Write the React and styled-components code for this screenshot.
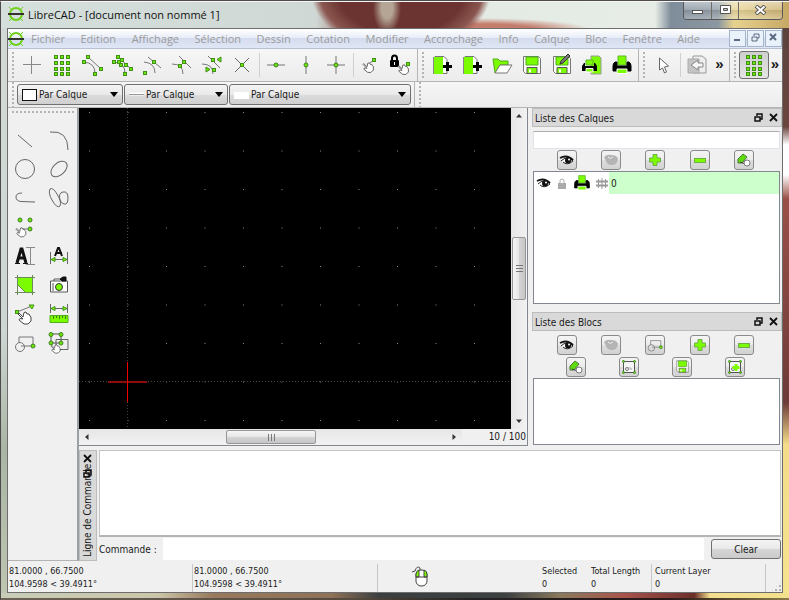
import { useState } from 'react';
import styled, { createGlobalStyle, css } from 'styled-components';

const GlobalStyle = createGlobalStyle`
  * {
    box-sizing: border-box;
  }
  body {
    margin: 0;
    font-family: 'DejaVu Sans Condensed', 'DejaVu Sans', sans-serif;
    font-size: 10px;
    color: #1a1a1a;
  }
  button, input, select {
    font: inherit;
    color: inherit;
  }
`;

const GREEN = '#7cfc00';

/* ---------- window frame ---------- */

const Desktop = styled.div`
  min-height: 100vh;
  display: flex;
  flex-direction: column;
  padding: 0 6px 7px 7px;
  border-top: 1px solid #4e4b4a;
  background:
    linear-gradient(#4e4b4a, #4e4b4a) 0 0 / 1px 100% no-repeat,
    linear-gradient(90deg, #6a6255, #55493c 45%, #222 60%, #2b1a18 85%, #8a7a48) 0 100% / 100% 2px no-repeat,
    linear-gradient(90deg, #c8cdb8, #cbc6a9 20%, #98795c 27%, #8e7258 42%, #3c3f3f 48%, #3c4040 64%, #8a7a5e 71%, #a8544c 79%, #6b3029 88%, #f3e08e 90%) 0 100% / 100% 7px no-repeat,
    linear-gradient(#59423c, #6b4640 21%, #fff 24%, #fff 29%, #9a5048 33%, #6d3b38 67%, #f3dc8a 74%, #f5e48f) 100% 0 / 6px 100% no-repeat,
    linear-gradient(#d3dad6, #cdd6d3 55%, #aab5a5 75%, #bfc6b2) 0 0 / 7px 100% no-repeat;
`;

const TitleBar = styled.header`
  height: 27px;
  margin: 0 -6px 0 -7px;
  padding: 0 6px 0 7px;
  display: flex;
  align-items: flex-start;
  border-left: 1px solid #4e4b4a;
  border-top: 1px solid #f4f6f5;
  background:
    radial-gradient(ellipse 14px 26px at 386px 6px, #b5a594 40%, transparent),
    radial-gradient(ellipse 90px 60px at 400px -10px, #6b3431 70%, #8b5650 90%, transparent),
    radial-gradient(ellipse 110px 12px at 480px 28px, #c47c6c 50%, transparent),
    linear-gradient(90deg, #d5dfdb 0, #cfd8d4 40%, #8d4d48 46%, #6b3431 56%, #e3ebe4 60%, #e7ede6 83%, #7f8d9b 85%, #8b97a1 91%, #e7d38f 93%, #c7a865);
`;

const Title = styled.h1`
  flex: 1;
  margin: 0;
  padding-left: 4px;
  font: 11px/25px 'Open Sans', 'Noto Sans', sans-serif;
  color: #111;
`;

const TitleIcon = styled.span`
  display: flex;
  padding-top: 4px;
`;

const WindowButtons = styled.div`
  display: flex;
  border: 1px solid #57575a;
  border-top: 0;
  border-radius: 0 0 4px 4px;
  background: rgba(255, 255, 255, 0.1);
`;

const WindowButton = styled.button`
  width: ${(props) => (props.$wide ? 44 : 27)}px;
  height: 17px;
  padding: 0;
  border: 0;
  border-left: 1px solid #6f6b65;
  background: linear-gradient(rgba(255, 255, 255, 0.4), rgba(255, 255, 255, 0.1) 50%, rgba(0, 0, 0, 0.08) 50%, rgba(255, 255, 255, 0.2));
  &:first-child {
    border-left: 0;
  }
`;

const Client = styled.div`
  flex: 1;
  display: flex;
  flex-direction: column;
  border: 1px solid #6d6d6d;
  background: #f0f0f0;
`;

/* ---------- menu ---------- */

const MenuBar = styled.nav`
  height: 20px;
  display: flex;
  align-items: center;
  border-bottom: 1px solid #b9c0cf;
  background: linear-gradient(#fff, #e8edf7 45%, #d5dcee 50%, #dfe6f5);
`;

const MenuList = styled.div`
  flex: 1;
  display: flex;
  justify-content: space-between;
  margin-right: 22px;
`;

const MenuItem = styled.button`
  padding: 0 7px;
  border: 0;
  background: none;
  font: 11px/18px 'Open Sans', 'Noto Sans', sans-serif;
  color: #9c9c9c;
`;

const ChildButtons = styled.div`
  display: flex;
  gap: 1px;
`;

const ChildButton = styled.button`
  width: 17px;
  height: 17px;
  padding: 0;
  border: 1px solid #a3b4cb;
  background: #e9f1fa;
`;

/* ---------- toolbars ---------- */

const ToolRow = styled.div`
  display: flex;
  height: ${(props) => props.$height}px;
  border-bottom: 1px solid #b4b4b4;
  background: linear-gradient(#f6f6f6, #ececec);
`;

const ToolGroup = styled.div`
  display: flex;
  align-items: center;
  border-right: ${(props) => (props.$last ? 0 : '1px solid #b4b4b4')};
  padding-right: ${(props) => props.$end || 0}px;
`;

const dots = css`
  background-image: radial-gradient(circle at 1px 1px, #b4b4b4 1px, transparent 1px);
  background-size: 4px 4px;
`;

const Handle = styled.div`
  width: 3px;
  height: 26px;
  margin: 0 2px 0 4px;
  ${dots}
`;

const Divider = styled.div`
  width: 1px;
  height: 24px;
  margin: 0 1px 0 2px;
  background: #d0d0d0;
`;

const ToolButton = styled.button`
  width: 30px;
  height: 28px;
  padding: 0;
  display: flex;
  align-items: center;
  justify-content: center;
  border: 1px solid ${(props) => (props.$pressed ? '#6f6f6f' : 'transparent')};
  border-radius: 3px;
  background: ${(props) => (props.$pressed ? 'linear-gradient(#cfcfcf, #e4e4e4)' : 'none')};
`;

const MoreButton = styled.button`
  width: ${(props) => props.$width}px;
  height: 28px;
  padding: 0 0 2px;
  border: 0;
  background: none;
  font: bold 15px/20px 'Liberation Sans', sans-serif;
`;

const Combo = styled.label`
  display: flex;
  align-items: center;
  width: ${(props) => props.$width}px;
  height: 21px;
  margin-right: 1px;
  padding: 0 4px;
  gap: 2px;
  border: 1px solid #707070;
  border-radius: 3px;
  background: linear-gradient(#f4f4f4, #e9e9e9 50%, #dcdcdc 50%, #cfcfcf);
`;

const ComboSelect = styled.select`
  flex: 1;
  min-width: 0;
  padding: 0;
  border: 0;
  background: none;
  appearance: none;
`;

/* ---------- work area ---------- */

const Body = styled.div`
  flex: 1;
  display: flex;
`;

const Palette = styled.aside`
  width: 71px;
  border-right: 2px solid #9c9fa4;
  border-bottom: 1px solid #b4b4b4;
`;

const PaletteHandle = styled.div`
  height: 3px;
  margin: 3px 2px 11px 4px;
  ${dots}
`;

const PaletteGrid = styled.div`
  display: grid;
  grid-template-columns: 34px 34px;
  grid-auto-rows: 29px;
`;

const PaletteButton = styled.button`
  padding: 0;
  display: flex;
  align-items: center;
  justify-content: center;
  border: 0;
  background: none;
  grid-column: ${(props) => (props.$wide ? 'span 2' : 'auto')};
  width: 34px;
`;

const Right = styled.div`
  flex: 1;
  min-width: 0;
  display: flex;
  flex-direction: column;
`;

const Upper = styled.div`
  flex: 1;
  display: flex;
  gap: 4px;
`;

const Drawing = styled.main`
  flex: 1;
  min-width: 0;
  display: grid;
  grid-template: 1fr 16px / 1fr 16px;
  border-right: 1px solid #828790;
  border-bottom: 1px solid #828790;
`;

const Canvas = styled.div`
  position: relative;
  overflow: hidden;
  background: #000;
  svg {
    position: absolute;
    inset: 0;
  }
`;

const Bar = styled.div`
  display: flex;
  flex-direction: ${(props) => (props.$vertical ? 'column' : 'row')};
  flex: 1;
  background: linear-gradient(${(props) => (props.$vertical ? '90deg' : '180deg')}, #e6e6e6, #f2f2f2);
`;

const ArrowButton = styled.button`
  width: 16px;
  height: 16px;
  padding: 0;
  display: flex;
  align-items: center;
  justify-content: center;
  border: 0;
  background: none;
`;

const Track = styled.div`
  flex: 1;
`;

const Thumb = styled.div`
  display: flex;
  align-items: center;
  justify-content: center;
  width: ${(props) => (props.$vertical ? 14 : 90)}px;
  height: ${(props) => (props.$vertical ? 63 : 14)}px;
  margin: 1px;
  border: 1px solid #979797;
  border-radius: 2px;
  background: linear-gradient(${(props) => (props.$vertical ? '90deg' : '180deg')}, #f5f5f5, #e6e6e6 50%, #d4d4d4 50%, #c6c6c6);
`;

const BottomStrip = styled.div`
  grid-column: span 2;
  display: flex;
`;

const Zoom = styled.output`
  width: 65px;
  padding-right: 1px;
  line-height: 15px;
  text-align: right;
`;

/* ---------- docks ---------- */

const Docks = styled.div`
  width: 250px;
  display: flex;
  flex-direction: column;
  gap: 7px;
`;

const Dock = styled.section`
  flex: ${(props) => props.$grow} 0 auto;
  display: flex;
  flex-direction: column;
  padding-bottom: 1px;
`;

const DockTitle = styled.h2`
  display: flex;
  align-items: center;
  gap: 6px;
  height: 19px;
  margin: 0;
  padding: 0 3px 0 2px;
  border: 1px solid #bcbcbc;
  background: #d9d9d9;
  font-size: 10px;
  font-weight: normal;
  span {
    flex: 1;
    padding-top: 2px;
  }
`;

const DockButton = styled.button`
  display: flex;
  padding: 0;
  border: 0;
  background: none;
`;

const DockBody = styled.div`
  flex: 1;
  display: flex;
  flex-direction: column;
  padding: ${(props) => props.$top}px 2px 0 1px;
`;

const Filter = styled.input`
  height: 18px;
  padding: 0 3px;
  border: 1px solid #e2e3ea;
  border-top-color: #abadb3;
  background: #fff;
`;

const ButtonRow = styled.div`
  display: flex;
  justify-content: space-evenly;
  padding: 1px 2px 1px 0;
`;

const SmallButton = styled.button`
  width: 20px;
  height: 20px;
  padding: 0;
  display: flex;
  align-items: center;
  justify-content: center;
  border: 1px solid #8a8a8a;
  border-radius: 3px;
  background: linear-gradient(#f4f4f4, #ebebeb 50%, #dedede 50%, #d2d2d2);
`;

const ListBox = styled.div`
  flex: 1;
  border: 1px solid #828790;
  background: #fff;
`;

const LayerTable = styled.table`
  width: 100%;
  border-collapse: collapse;
  td {
    height: 22px;
    padding: 0;
  }
  svg {
    display: block;
    margin: auto;
  }
`;

const IconCell = styled.td`
  width: ${(props) => props.$width}px;
`;

const NameCell = styled.td`
  background: #ccffcc;
  span {
    padding-left: 2px;
  }
`;

/* ---------- command line ---------- */

const CommandDock = styled.section`
  display: flex;
  height: 111px;
  margin-top: 4px;
`;

const CommandTitle = styled.div`
  position: relative;
  width: 18px;
  padding-bottom: 3px;
  border: 1px solid #bcbcbc;
  background: #d9d9d9;
  h2 {
    width: 100%;
    height: 100%;
    margin: 0;
    font-size: 10px;
    font-weight: normal;
    line-height: 16px;
    writing-mode: vertical-rl;
    transform: rotate(180deg);
  }
`;

const CommandButtons = styled.div`
  position: absolute;
  top: 3px;
  left: 3px;
  display: flex;
  flex-direction: column;
  gap: 6px;
`;

const CommandBody = styled.div`
  flex: 1;
  display: flex;
  flex-direction: column;
  padding: 0 1px 0 2px;
`;

const History = styled.div`
  flex: 1;
  border: 1px solid #c4c4c4;
  border-bottom: 2px solid #b4b4b4;
  background: #fff;
`;

const Prompt = styled.form`
  display: flex;
  align-items: center;
  height: 24px;
  input {
    flex: 1;
    height: 22px;
    margin: 0 7px 0 6px;
    border: 0;
    background: #fff;
  }
`;

const ClearButton = styled.button`
  width: 70px;
  height: 20px;
  padding: 0;
  border: 1px solid #707070;
  border-radius: 3px;
  background: linear-gradient(#f4f4f4, #e9e9e9 50%, #d6d6d6 50%, #cbcbcb);
`;

/* ---------- status bar ---------- */

const StatusBar = styled.footer`
  display: flex;
  height: 31px;
  padding-top: 3px;
  font-size: 9px;
  line-height: 13px;
`;

const StatusCell = styled.div`
  flex: ${(props) => (props.$grow ? 1 : 'none')};
  width: ${(props) => props.$width}px;
  padding: 1px 0 0 ${(props) => props.$pad ?? 1}px;
  border-left: 1px solid ${(props) => (props.$line ? '#c6c6c6' : 'transparent')};
  white-space: pre;
`;

const Grip = styled.div`
  align-self: flex-end;
  width: 11px;
  height: 11px;
  ${dots}
  clip-path: polygon(100% 0, 100% 100%, 0 100%);
`;

/* ---------- icons ---------- */

const Svg = ({ w = 22, h = w, children, box }) => (
  <svg width={w} height={h} viewBox={box || `0 0 ${w} ${h}`} fill="none" stroke="#777" aria-hidden="true">
    {children}
  </svg>
);

// green square handle used by most snap icons
const Node = ({ x, y }) => (
  <rect x={Math.floor(x) - 1.5} y={Math.floor(y) - 1.5} width="3" height="3" fill="#6be60a" stroke="#3f8f18" />
);

const Dot = ({ x, y, r = 2 }) => <circle cx={x} cy={y} r={r} fill="#6be60a" stroke="#3f7f20" />;

const Hand = ({ x = 0, y = 0, s = 1 }) => (
  <g transform={`translate(${x} ${y}) scale(${s})`}>
    <path d="M1 2 L5 6 L6 1.5 L8 1 L9 3 L11 3 L12 5 L13 6 L13 10 L10 13 L6 13 L1 9 L2 7.5 L5 8 L0 3Z" fill="#fff" stroke="#444" />
  </g>
);

const Logo = () => (
  <Svg w={16} h={16}>
    <circle cx="8" cy="8" r="6" stroke="#6fd01c" strokeWidth="2" />
    <path d="M1 1l3 3M15 1l-3 3M1 15l3-3M15 15l-3-3" stroke="#6fd01c" />
    <path d="M0 8h16" stroke="#333" strokeWidth="2" />
  </Svg>
);

const IconFree = () => (
  <Svg><path d="M2 10.5h18M10.5 2v18" stroke="#888" /></Svg>
);

const IconGrid = () => (
  <Svg>
    {[3, 9, 15, 20].map((y) => [5, 11, 17].map((x) => <Node key={`${x}-${y}`} x={x} y={y} />))}
  </Svg>
);

const IconEndpoint = () => (
  <Svg>
    <path d="M7 3L19 14M3 8Q14 9 14 19" />
    <Node x={7} y={3} /><Node x={3} y={8} /><Node x={20} y={15} /><Node x={14} y={20} />
  </Svg>
);

const IconOnEntity = () => (
  <Svg>
    <path d="M7 3L19 14M3 8Q14 9 14 19" />
    <Node x={7} y={3} /><Node x={11} y={6} /><Node x={3} y={8} /><Node x={8} y={8} /><Node x={10} y={11} />
    <Node x={15} y={11} /><Node x={20} y={15} /><Node x={14} y={20} />
  </Svg>
);

const IconCenter = () => (
  <Svg>
    <path d="M7 3L20 14M3 8Q14 9 14 19" />
    <Node x={13} y={8} /><Node x={4} y={19} />
  </Svg>
);

const IconMiddle = () => (
  <Svg>
    <path d="M8 2L20 14M1 10Q12 10 12 20" />
    <Node x={13} y={8} /><Node x={9} y={12} />
  </Svg>
);

const IconDistance = () => (
  <Svg>
    <path d="M7 2L19 14M1 10Q12 10 12 20" />
    <Node x={12} y={6} /><Node x={13} y={16} />
    <path d="M20 3v5l-4-2.500zM5 13v5l4-2.500z" fill="#6be60a" stroke="#3f8f18" />
  </Svg>
);

const IconIntersection = () => (
  <Svg><path d="M4 4l14 14M18 4L4 18" stroke="#666" /><Node x={11} y={11} /></Svg>
);

const IconRestrict = ({ h, v }) => (
  <Svg>
    {h && <path d="M2 11h18" />}
    {v && <path d="M11 2v18" />}
    <Dot x={11} y={11} />
  </Svg>
);

const IconSetZero = () => (
  <Svg><path d="M11 9l5-4" /><Hand x={4} y={8} s={0.8} /><Node x={15} y={6} /></Svg>
);

const IconLockZero = () => (
  <Svg>
    <path d="M3 7V4.500Q3 1.500 5.500 1.500T8 4.500V7" stroke="#000" strokeWidth="2" />
    <rect x="1" y="6" width="9" height="7" rx="1" fill="#000" stroke="none" />
    <path d="M5.500 8v3" stroke="#fff" />
    <Hand x={9} y={10} s={0.8} /><Node x={19} y={10} />
  </Svg>
);

const IconNew = () => (
  <Svg>
    <path d="M4 2.500h9l3 3v14H4z" fill="#fff" stroke="#777" />
    <path d="M3 3h9v17H3z" fill={GREEN} stroke="none" />
    <path d="M2.500 20V3" stroke="#888" />
    <path d="M16.500 8v9M12 12.500h9" stroke="#000" strokeWidth="3" />
  </Svg>
);

const IconOpen = () => (
  <Svg>
    <path d="M2 5h5l2 2h8v4H9l-5 8z" fill={GREEN} stroke="#4fae1c" />
    <path d="M9 11h12l-5 8H4z" fill="#fff" stroke="#777" />
  </Svg>
);

const IconSave = ({ pen, s = 22 }) => (
  <Svg w={s} h={s} box="0 0 22 22">
    <path d="M2.500 2.500h15l2 2v15h-15l-2-2z" fill="#fff" stroke="#777" />
    <path d="M5 3h12v8H5z" fill={GREEN} stroke="#4fae1c" />
    <path d="M6 13.500h10v6H6z" fill={GREEN} stroke="#555" />
    <path d="M9 15.500v3" stroke="#fff" strokeWidth="2" />
    {pen && <path d="M9 10l1-3 7-7 2 2-7 7z" fill="#777" stroke="#333" />}
  </Svg>
);

const IconPreview = () => (
  <Svg>
    <path d="M10 2h8l2 2v16H10z" fill={GREEN} stroke="#999" />
    <path d="M5 6h7v5H5z" fill={GREEN} stroke="#5ab82a" />
    <path d="M3 9h1v3h9V9h1l2 3v5H1v-5z" fill="#000" stroke="none" />
    <path d="M5 14.500h7V18H5z" fill={GREEN} stroke="#fff" />
  </Svg>
);

const IconPrint = ({ s = 22 }) => (
  <Svg w={s} h={s} box="0 0 22 22">
    <path d="M7 2h8v9H7z" fill={GREEN} stroke="#5ab82a" />
    <path d="M4 8h2v4h10V8h2q2 1 2 4v5H2v-5q0-3 2-4z" fill="#000" stroke="#000" />
    <path d="M6 15h10v4.500H6z" fill={GREEN} stroke="#fff" />
  </Svg>
);

const IconPointer = () => (
  <Svg><path d="M7.500 4v12l3-2 2 5 2-1-2-5 4-1z" fill="#fff" stroke="#666" /></Svg>
);

const IconBack = () => (
  <Svg>
    <path d="M7 2h9l4 3v14H7z" fill="#eee" stroke="#999" />
    <path d="M2 5h11v14H2z" fill="#c4c4c4" stroke="#aaa" />
    <path d="M5 11l7-5v3h5v4h-5v3z" fill="#f6f6f6" stroke="#888" />
  </Svg>
);

const IconLine = () => <Svg><path d="M4 6l14 12" stroke="#666" /></Svg>;
const IconArc = () => <Svg><path d="M2 3Q20 1 20 21" stroke="#666" /></Svg>;
const IconCircle = () => <Svg><circle cx="11" cy="11" r="9.500" stroke="#666" /></Svg>;
const IconEllipse = () => (
  <Svg><ellipse cx="11" cy="11" rx="9.500" ry="6" transform="rotate(-42 11 11)" stroke="#666" /></Svg>
);
const IconPolyline = () => (
  <Svg><path d="M8 6Q2 6 2 10Q2 14 7 14.500L21 15" stroke="#666" /></Svg>
);
const IconSpline = () => (
  <Svg>
    <path d="M2 2Q0 6 4 13Q9 22 12 19Q14 15 9 7Q5 0 2 2zM12 13Q10 6 15 5Q20 4 20 11Q20 18 16 17Q13 16 12 13z" stroke="#666" />
  </Svg>
);

const IconPoints = () => (
  <Svg>
    <Dot x={6} y={4} /><Dot x={16} y={4} /><Dot x={16} y={13} />
    <path d="M8 13h7" /><Hand x={2} y={11} s={0.75} />
  </Svg>
);

const IconText = () => (
  <Svg>
    <path d="M3 18L7 4h1l4 14M5 13h6" stroke="#111" strokeWidth="3" />
    <path d="M1 18.500h5M9 18.500h5" stroke="#111" />
    <path d="M12 2.500h9M16.500 2v17M12 19.500h9" stroke="#888" />
  </Svg>
);

const IconDimension = () => (
  <Svg>
    <path d="M7 11L10 3h1l3 8M8 8h6" stroke="#111" strokeWidth="2" />
    <path d="M2.500 7v12M19.500 7v12M3 14.500h16" stroke="#666" />
    <path d="M3 14.500l4-2v4zM19 14.500l-4-2v4z" fill={GREEN} stroke="#3f8f18" />
  </Svg>
);

const IconHatch = () => (
  <Svg>
    <path d="M4 4h14v14h-7L4 11z" fill={GREEN} stroke="none" />
    <path d="M1 3.500h20M1 18.500h20M3.500 1v20M18.500 1v20M3 10l9 9" stroke="#6a8a58" />
  </Svg>
);

const IconCamera = () => (
  <Svg>
    <path d="M2.500 7h17v11h-17zM6 7V5h6M5 9v8" fill="#fff" stroke="#555" />
    <path d="M12 5l3-2h3v4h-4z" fill="#111" stroke="#111" />
    <circle cx="11" cy="13" r="3.500" fill={GREEN} stroke="#333" />
  </Svg>
);

const IconModify = () => (
  <Svg>
    <path d="M3 9L18 3" /><Node x={3} y={9} /><path d="M15 2h5l-2 4z" fill={GREEN} stroke="#3f8f18" />
    <Hand x={4} y={8} />
  </Svg>
);

const IconMeasure = () => (
  <Svg>
    <path d="M2.500 1v9M19.500 1v9M3 5.500h16" stroke="#666" />
    <path d="M3 5.500l4-2v4zM19 5.500l-4-2v4z" fill={GREEN} stroke="#3f8f18" />
    <path d="M2 12.500h18v7H2z" fill={GREEN} stroke="#4fae1c" />
    <path d="M5.500 13v3M8.500 13v2M11.500 13v3M14.500 13v2M17.500 13v3" stroke="#3a7a18" />
  </Svg>
);

const IconBlock = ({ s = 22 }) => (
  <Svg w={s} h={s} box="0 0 22 22">
    <path d="M5 11V5h14v9H7" stroke="#777" /><circle cx="6" cy="15" r="4.500" stroke="#777" /><Dot x={19} y={14} />
  </Svg>
);

const IconSelect = () => (
  <Svg>
    <path d="M8 7.500h12v10H8z" fill="#eee" stroke="#666" />
    <path d="M3 2h10v9H3z" stroke="#555" />
    <Dot x={3} y={2.500} /><Dot x={13} y={2.500} /><Dot x={3} y={11} /><Dot x={13} y={11} />
    <Hand x={3} y={12} s={0.7} />
  </Svg>
);

const IconEye = ({ off }) => (
  <Svg w={16} h={14}>
    {off ? (
      <>
        <path d="M1 4Q4 1 8 2Q14 2 15 6Q14 12 9 12Q4 12 3 8Z" fill="#b4b4b4" stroke="none" />
        <path d="M5 4Q7 7 10 4" stroke="#eee" />
      </>
    ) : (
      <>
        <path d="M2 8Q8 2 14 8Q8 13 4 9" fill="#fff" stroke="#222" />
        <path d="M1 5Q8 1 14 7" stroke="#111" strokeWidth="2" />
        <circle cx="9" cy="7.500" r="3" fill="#111" stroke="none" />
        <circle cx="10" cy="6.500" r="1" fill="#fff" stroke="none" />
      </>
    )}
  </Svg>
);

const IconPlus = () => (
  <Svg w={14}><path d="M5 1.500h4V5h3.500v4H9v3.500H5V9H1.500V5H5z" fill={GREEN} stroke="#6fae48" /></Svg>
);

const IconMinus = () => (
  <Svg w={14}><rect x="1.500" y="5.500" width="11" height="4" fill={GREEN} stroke="#6fae48" /></Svg>
);

const IconEdit = () => (
  <Svg w={14}>
    <path d="M1 6l5-5 4 3-5 6H1z" fill="#5fdc10" stroke="#4b7a32" />
    <path d="M3 9l8 3" stroke="#444" />
    <circle cx="10" cy="10" r="3" fill="#fff" stroke="#777" />
  </Svg>
);

const IconFrame = ({ plus }) => (
  <Svg w={16}>
    <path d="M2.500 2.500h11v11h-11z" fill="#f4f4f4" stroke="#555" />
    <Dot x={2.500} y={2.500} r={1} /><Dot x={13.500} y={2.500} r={1} /><Dot x={2.500} y={13.500} r={1} /><Dot x={13.500} y={13.500} r={1} />
    <circle cx="6" cy="10" r="1.500" />
    {plus ? <path d="M9 5v7M5.500 8.500h7" stroke={GREEN} strokeWidth="3" /> : <path d="M7 9h3v2" stroke="#aaa" />}
  </Svg>
);

const IconLock = () => (
  <Svg w={8} h={11}>
    <path d="M2 5V3q0-2 2-2t2 2v2" stroke="#aaa" /><rect x="0" y="5" width="8" height="6" fill="#aaa" stroke="none" />
  </Svg>
);

const IconHash = () => (
  <Svg w={12} h={11}>
    <path d="M0 3.500h12M0 7.500h12" stroke="#999" strokeWidth="2" />
    <path d="M2.500 1v9M6 0v11M9.500 1v9" stroke="#999" />
  </Svg>
);

const IconRestore = () => (
  <Svg w={9} h={9}>
    <path d="M3 3V1h5v5H6" stroke="#111" strokeWidth="1.500" /><path d="M1 4h5v4H1z" stroke="#111" strokeWidth="1.500" />
  </Svg>
);

const IconClose = () => (
  <Svg w={9} h={9}><path d="M1 1l7 7M8 1L1 8" stroke="#111" strokeWidth="1.800" /></Svg>
);

const Arrow = ({ dir }) => {
  const angle = { down: 0, left: 90, up: 180, right: 270 }[dir];
  return <Svg w={8}><path d="M1 2.500h6L4 6z" fill="#333" stroke="none" transform={`rotate(${angle} 4 4)`} /></Svg>;
};

const IconMouse = () => (
  <Svg w={18} h={24}>
    <path d="M1 7l3-1Q6 0 9 3v3" stroke="#444" />
    <rect x="5" y="5" width="11" height="16" rx="5" fill="#fff" stroke="#444" />
    <path d="M5 12V9q0-3 3-4v7zM16 12V9q0-3-3-4v7z" fill={GREEN} stroke="#444" />
    <path d="M5 12h11" stroke="#444" />
  </Svg>
);

/* ---------- data ---------- */

const menus = ['Fichier', 'Edition', 'Affichage', 'Sélection', 'Dessin', 'Cotation', 'Modifier', 'Accrochage', 'Info', 'Calque', 'Bloc', 'Fenêtre', 'Aide'];

const snapTools = [
  ['Accrochage libre', <IconFree />],
  ['Grille', <IconGrid />],
  ['Extrémités', <IconEndpoint />],
  ['Sur entité', <IconOnEntity />],
  ['Centres', <IconCenter />],
  ['Milieux', <IconMiddle />],
  ['Distance', <IconDistance />],
  ['Intersection', <IconIntersection />],
];

const restrictTools = [
  ['Restriction horizontale', <IconRestrict h />],
  ['Restriction verticale', <IconRestrict v />],
  ['Restriction orthogonale', <IconRestrict h v />],
];

const zeroTools = [
  ['Zéro relatif', <IconSetZero />],
  ['Verrouiller le zéro relatif', <IconLockZero />],
];

const fileTools = [
  ['Nouveau', <IconNew />],
  ['Nouveau modèle', <IconNew />],
  ['Ouvrir', <IconOpen />],
  ['Enregistrer', <IconSave />],
  ['Enregistrer sous', <IconSave pen />],
  ['Aperçu', <IconPreview />],
  ['Imprimer', <IconPrint />],
];

const paletteTools = [
  ['Lignes', <IconLine />],
  ['Arcs', <IconArc />],
  ['Cercles', <IconCircle />],
  ['Ellipses', <IconEllipse />],
  ['Polylignes', <IconPolyline />],
  ['Splines', <IconSpline />],
  ['Points', <IconPoints />, true],
  ['Texte', <IconText />],
  ['Cotations', <IconDimension />],
  ['Hachures', <IconHatch />],
  ['Image', <IconCamera />],
  ['Modifier', <IconModify />],
  ['Mesurer', <IconMeasure />],
  ['Blocs', <IconBlock />],
  ['Sélectionner', <IconSelect />],
];

const Tools = ({ items }) =>
  items.map(([name, icon]) => (
    <ToolButton key={name} aria-label={name}>{icon}</ToolButton>
  ));

const PenCombo = ({ name, width, swatch }) => (
  <Combo $width={width}>
    {swatch}
    <ComboSelect aria-label={name}>
      <option>Par Calque</option>
    </ComboSelect>
    <Svg w={8} h={5}><path d="M0 0h8L4 5z" fill="#000" stroke="none" /></Svg>
  </Combo>
);

const DockHeader = ({ title }) => (
  <DockTitle>
    <span>{title}</span>
    <DockButton aria-label="Détacher"><IconRestore /></DockButton>
    <DockButton aria-label="Fermer"><IconClose /></DockButton>
  </DockTitle>
);

const Grid = () => (
  <svg width="100%" height="100%" aria-hidden="true">
    <defs>
      <pattern id="dots" x="10" y="4" width="38.500" height="38.500" patternUnits="userSpaceOnUse">
        <rect width="1" height="1" fill="#888" />
      </pattern>
    </defs>
    <rect width="100%" height="100%" fill="url(#dots)" />
    <path d="M48.500 0v2000M0 273.500h4000" stroke="#444" strokeDasharray="1 2" />
    <rect x="29" y="273" width="39" height="2" fill="#8b0c0c" />
    <rect x="48" y="254" width="1" height="40" fill="#f00000" />
  </svg>
);

const App = () => {
  const [command, setCommand] = useState('');

  return (
    <>
      <GlobalStyle />
      <Desktop>
        <TitleBar>
          <TitleIcon><Logo /></TitleIcon>
          <Title>LibreCAD - [document non nommé 1]</Title>
          <WindowButtons>
            <WindowButton aria-label="Réduire">
              <Svg w={13} h={10}><rect x="1.500" y="5.500" width="10" height="3" fill="#fff" stroke="#555" /></Svg>
            </WindowButton>
            <WindowButton aria-label="Agrandir">
              <Svg w={13} h={10}><path d="M1.500 .500h10v8h-10zM4.500 3.500h4v2h-4z" fill="#fff" fillRule="evenodd" stroke="#555" /></Svg>
            </WindowButton>
            <WindowButton $wide aria-label="Fermer">
              <Svg w={13} h={10}>
                <path d="M2 1l9 8M11 1L2 9" stroke="#555" strokeWidth="4" />
                <path d="M2.500 1.500l8 7M10.500 1.500l-8 7" stroke="#fff" strokeWidth="2" />
              </Svg>
            </WindowButton>
          </WindowButtons>
        </TitleBar>
        <Client>
          <MenuBar>
            <Logo />
            <MenuList>
              {menus.map((menu) => <MenuItem key={menu}>{menu}</MenuItem>)}
            </MenuList>
            <ChildButtons>
              <ChildButton aria-label="Réduire le document"><Svg w={9} h={9}><path d="M1 7h6" stroke="#5b6b82" strokeWidth="2" /></Svg></ChildButton>
              <ChildButton aria-label="Restaurer le document"><Svg w={9} h={9}><path d="M3 3V1h5v4H6M1 4h5v4H1z" stroke="#5b6b82" /></Svg></ChildButton>
              <ChildButton aria-label="Fermer le document"><Svg w={9} h={9}><path d="M1 1l6 6M7 1L1 7" stroke="#5b6b82" strokeWidth="2" /></Svg></ChildButton>
            </ChildButtons>
          </MenuBar>
          <ToolRow $height={33}>
            <ToolGroup $end={2}>
              <Handle />
              <Tools items={snapTools} />
              <Divider />
              <Tools items={restrictTools} />
              <Divider />
              <Tools items={zeroTools} />
            </ToolGroup>
            <ToolGroup $end={1}>
              <Handle />
              <Tools items={fileTools} />
            </ToolGroup>
            <ToolGroup $end={2}>
              <Handle />
              <ToolButton aria-label="Sélection"><IconPointer /></ToolButton>
              <Divider />
              <ToolButton aria-label="Retour"><IconBack /></ToolButton>
              <MoreButton $width={15}>»</MoreButton>
            </ToolGroup>
            <ToolGroup $last>
              <Handle />
              <ToolButton $pressed aria-label="Afficher la grille"><IconGrid /></ToolButton>
              <MoreButton $width={12}>»</MoreButton>
            </ToolGroup>
          </ToolRow>
          <ToolRow $height={26}>
            <ToolGroup $end={2}>
              <Handle />
              <PenCombo name="Couleur" width={106} swatch={<Svg w={15} h={12}><rect x=".500" y=".500" width="14" height="11" fill="#fff" stroke="#111" /></Svg>} />
              <PenCombo name="Épaisseur" width={104} swatch={<Svg w={15} h={12}><path d="M0 5h15" stroke="#fff" strokeWidth="3" /><path d="M0 5.500h15" stroke="#999" /></Svg>} />
              <PenCombo name="Type de ligne" width={182} swatch={<Svg w={15} h={12}><rect y="3" width="15" height="7" fill="#fff" stroke="none" /></Svg>} />
            </ToolGroup>
            <ToolGroup $last><Handle /></ToolGroup>
          </ToolRow>
          <Body>
            <Palette>
              <PaletteHandle />
              <PaletteGrid>
                {paletteTools.map(([name, icon, wide]) => (
                  <PaletteButton key={name} $wide={wide} aria-label={name}>{icon}</PaletteButton>
                ))}
              </PaletteGrid>
            </Palette>
            <Right>
              <Upper>
                <Drawing>
                  <Canvas><Grid /></Canvas>
                  <Bar $vertical>
                    <ArrowButton aria-label="Haut"><Arrow dir="up" /></ArrowButton>
                    <Track />
                    <Thumb $vertical><Svg w={7} h={7}><path d="M0 .500h7M0 3.500h7M0 6.500h7" /></Svg></Thumb>
                    <Track />
                    <ArrowButton aria-label="Bas"><Arrow dir="down" /></ArrowButton>
                  </Bar>
                  <BottomStrip>
                    <Bar>
                      <ArrowButton aria-label="Gauche"><Arrow dir="left" /></ArrowButton>
                      <Track />
                      <Thumb><Svg w={8} h={7}><path d="M1.500 0v7M4.500 0v7M7.500 0v7" /></Svg></Thumb>
                      <Track />
                      <ArrowButton aria-label="Droite"><Arrow dir="right" /></ArrowButton>
                    </Bar>
                    <Zoom>10 / 100</Zoom>
                  </BottomStrip>
                </Drawing>
                <Docks>
                  <Dock $grow={5}>
                    <DockHeader title="Liste des Calques" />
                    <DockBody $top={4}>
                      <Filter aria-label="Filtrer les calques" />
                      <ButtonRow>
                        <SmallButton aria-label="Tout afficher"><IconEye /></SmallButton>
                        <SmallButton aria-label="Tout masquer"><IconEye off /></SmallButton>
                        <SmallButton aria-label="Ajouter un calque"><IconPlus /></SmallButton>
                        <SmallButton aria-label="Supprimer le calque"><IconMinus /></SmallButton>
                        <SmallButton aria-label="Modifier le calque"><IconEdit /></SmallButton>
                      </ButtonRow>
                      <ListBox>
                        <LayerTable>
                          <tbody>
                            <tr>
                              <IconCell $width={20}><IconEye /></IconCell>
                              <IconCell $width={15}><IconLock /></IconCell>
                              <IconCell $width={25}><IconPrint s={18} /></IconCell>
                              <IconCell $width={15}><IconHash /></IconCell>
                              <NameCell><span>0</span></NameCell>
                            </tr>
                          </tbody>
                        </LayerTable>
                      </ListBox>
                    </DockBody>
                  </Dock>
                  <Dock $grow={3}>
                    <DockHeader title="Liste des Blocs" />
                    <DockBody $top={3}>
                      <ButtonRow>
                        <SmallButton aria-label="Tout afficher"><IconEye /></SmallButton>
                        <SmallButton aria-label="Tout masquer"><IconEye off /></SmallButton>
                        <SmallButton aria-label="Créer un bloc"><IconBlock s={16} /></SmallButton>
                        <SmallButton aria-label="Ajouter un bloc"><IconPlus /></SmallButton>
                        <SmallButton aria-label="Supprimer le bloc"><IconMinus /></SmallButton>
                      </ButtonRow>
                      <ButtonRow>
                        <SmallButton aria-label="Renommer le bloc"><IconEdit /></SmallButton>
                        <SmallButton aria-label="Modifier le bloc"><IconFrame /></SmallButton>
                        <SmallButton aria-label="Enregistrer le bloc"><IconSave s={15} /></SmallButton>
                        <SmallButton aria-label="Insérer le bloc"><IconFrame plus /></SmallButton>
                      </ButtonRow>
                      <ListBox />
                    </DockBody>
                  </Dock>
                </Docks>
              </Upper>
              <CommandDock>
                <CommandTitle>
                  <h2>Ligne de Commande</h2>
                  <CommandButtons>
                    <DockButton aria-label="Fermer"><IconClose /></DockButton>
                    <DockButton aria-label="Détacher"><IconRestore /></DockButton>
                  </CommandButtons>
                </CommandTitle>
                <CommandBody>
                  <History />
                  <Prompt onSubmit={(e) => e.preventDefault()}>
                    <label htmlFor="command">Commande :</label>
                    <input id="command" value={command} onChange={(e) => setCommand(e.target.value)} />
                    <ClearButton type="button" onClick={() => setCommand('')}>Clear</ClearButton>
                  </Prompt>
                </CommandBody>
              </CommandDock>
            </Right>
          </Body>
          <StatusBar>
            <StatusCell $width={184} $pad={0}>{'81.0000 , 66.7500\n104.9598 < 39.4911°'}</StatusCell>
            <StatusCell $width={185} $line>{'81.0000 , 66.7500\n104.9598 < 39.4911°'}</StatusCell>
            <StatusCell $grow $line $pad={33}><IconMouse /></StatusCell>
            <StatusCell $width={49}>{'Selected\n0'}</StatusCell>
            <StatusCell $width={62}>{'Total Length\n0'}</StatusCell>
            <StatusCell $width={114} $line $pad={3}>{'Current Layer\n0'}</StatusCell>
            <StatusCell $width={6} $line />
            <Grip />
          </StatusBar>
        </Client>
      </Desktop>
    </>
  );
};

export default App;
